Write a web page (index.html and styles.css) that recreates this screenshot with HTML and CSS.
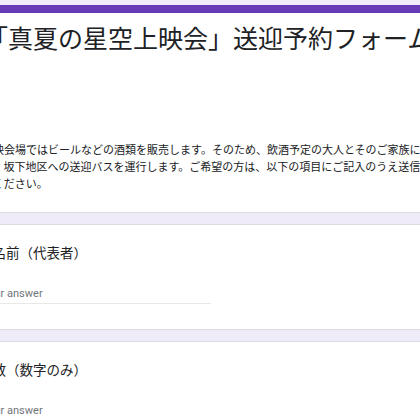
FILE: index.html
```html
<!DOCTYPE html>
<html lang="ja">
<head>
    <meta charset="UTF-8">
    <meta name="viewport" content="width=device-width, initial-scale=1.0">
    <title>「真夏の星空上映会」送迎予約フォーム</title>
    <link rel="stylesheet" href="styles.css">
</head>
<body>
    <div class="form">
        <div class="card header">
            <h1 class="title">「真夏の星空上映会」送迎予約フォーム</h1>
            <div class="desc">
                <span>上映会場ではビールなどの酒類を販売します。そのため、飲酒予定の大人とそのご家族に</span>
                <span>け、坂下地区への送迎バスを運行します。ご希望の方は、以下の項目にご記入のうえ送信</span>
                <span>てください。</span>
            </div>
        </div>

        <div class="card question">
            <div class="q-title">お名前（代表者）</div>
            <div class="answer">Your answer</div>
        </div>

        <div class="card question">
            <div class="q-title">人数（数字のみ）</div>
            <div class="answer">Your answer</div>
        </div>
    </div>
</body>
</html>
```

FILE: styles.css
```css
html, body { margin: 0; overflow: hidden; background-color: #f0ebf8; }
body { font-family: Roboto, "Noto Sans CJK JP", sans-serif; color: #202124; }
.form { width: 560px; margin-left: -43px; padding-top: 5px; display: flex; flex-direction: column; gap: 11px; }
.card { background: #fff; border: 1px solid #dadce0; border-radius: 8px; padding: 0 24px; }
.header { border-top: 8px solid #673ab7; padding-top: 10px; padding-bottom: 20px; }
.title { margin: 0 0 0 1px; font-family: "Noto Sans CJK JP", sans-serif; font-size: 25px; font-weight: 400; line-height: 29px; white-space: nowrap; }
.desc { margin-top: 89px; font-family: "Noto Sans CJK JP", sans-serif; font-size: 11px; line-height: 17px; }
.desc span { display: block; white-space: nowrap; }
.question { padding-top: 17px; padding-bottom: 25px; }
.q-title { margin-left: -3px; font-family: "Noto Sans CJK JP", sans-serif; font-size: 13.5px; line-height: 20px; white-space: nowrap; }
.answer { margin-top: 24px; width: 229px; padding-bottom: 1px; border-bottom: 1px solid #e8e8e8; font-size: 11px; line-height: 16px; color: #70757a; }
```
